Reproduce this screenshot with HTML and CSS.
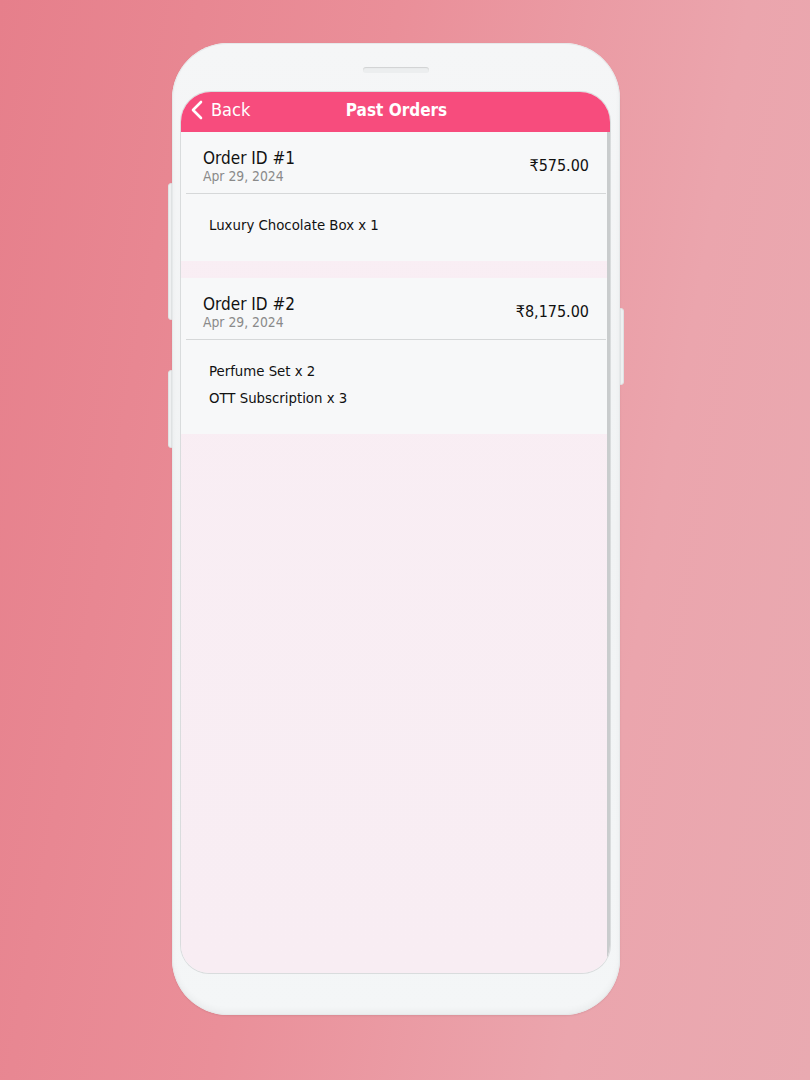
FILE: index.html
```html
<!DOCTYPE html>
<html>
<head>
<meta charset="utf-8">
<link rel="stylesheet" href="styles.css">
</head>
<body>
<div class="stage">
  <div class="phone">
    <span class="btn btn-l1"></span>
    <span class="btn btn-l2"></span>
    <span class="btn btn-r1"></span>
    <div class="speaker"></div>
    <div class="screen">
      <div class="topbar">
        <div class="back">
          <svg width="14" height="20" viewBox="0 0 14 20"><path d="M11 2 L3 10 L11 18" fill="none" stroke="#fff" stroke-width="2.6" stroke-linecap="round" stroke-linejoin="round"/></svg>
          <span>Back</span>
        </div>
        <div class="title">Past Orders</div>
      </div>
      <div class="list">
        <div class="card">
          <div class="card-head">
            <div class="ids">
              <div class="oid">Order ID #1</div>
              <div class="date">Apr 29, 2024</div>
            </div>
            <div class="price">₹575.00</div>
          </div>
          <div class="items">
            <div class="item">Luxury Chocolate Box x 1</div>
          </div>
        </div>
        <div class="card">
          <div class="card-head">
            <div class="ids">
              <div class="oid">Order ID #2</div>
              <div class="date">Apr 29, 2024</div>
            </div>
            <div class="price">₹8,175.00</div>
          </div>
          <div class="items">
            <div class="item">Perfume Set x 2</div>
            <div class="item">OTT Subscription x 3</div>
          </div>
        </div>
      </div>
    </div>
  </div>
</div>
</body>
</html>
```
FILE: styles.css
```css
html, body {
  margin: 0;
  padding: 0;
}
body {
  font-family: "DejaVu Sans Condensed", "DejaVu Sans", sans-serif;
}
.stage {
  width: 810px;
  height: 1080px;
  box-sizing: border-box;
  padding: 43px 0 0 172px;
  background: linear-gradient(100deg, #e67f8b 0%, #ea8f99 40%, #eba5ad 75%, #e9aab1 100%);
  overflow: hidden;
}
.phone {
  position: relative;
  width: 448px;
  height: 972px;
  box-sizing: border-box;
  padding: 49px 10px 42px 9px;
  border-radius: 56px;
  background: linear-gradient(180deg, #f5f6f7 0%, #f1f3f4 50%, #f4f6f7 100%);
  box-shadow: inset 0 0 0 1px #e6e9ea, inset 0 -4px 6px rgba(0,0,0,0.04), 0 1px 2px rgba(0,0,0,0.08);
}
.btn {
  position: absolute;
  width: 4px;
  background: #eef0f1;
  border: 1px solid #dfe2e3;
  box-sizing: border-box;
}
.btn-l1 { left: -4px; top: 140px; height: 137px; border-radius: 3px 0 0 3px; }
.btn-l2 { left: -4px; top: 327px; height: 78px; border-radius: 3px 0 0 3px; }
.btn-r1 { right: -4px; top: 265px; height: 77px; border-radius: 0 3px 3px 0; }
.speaker {
  position: absolute;
  left: 191px;
  top: 24px;
  width: 66px;
  height: 6px;
  border-radius: 3px;
  background: #eceeef;
  box-shadow: inset 0 1px 1px rgba(0,0,0,0.12);
}
.screen {
  height: 100%;
  border-radius: 30px 30px 28px 28px;
  overflow: hidden;
  background: linear-gradient(180deg, #f9eef4 0%, #f8edf3 100%);
  box-shadow: 0 0 0 1px #d9dcdd;
  display: flex;
  flex-direction: column;
}
.topbar {
  height: 40px;
  flex: none;
  background: #f74c7d;
  position: relative;
  display: flex;
  align-items: center;
  justify-content: center;
  color: #fff;
}
.back {
  position: absolute;
  left: 9px;
  top: 0;
  height: 40px;
  display: flex;
  align-items: center;
  gap: 7px;
  font-size: 18px;
}
.back svg { margin-top: -4px; }
.back span { margin-top: -5px; }
.title {
  font-size: 17px;
  font-weight: bold;
  margin-top: -5px;
  margin-left: 2px;
}
.list {
  flex: 1;
  display: flex;
  flex-direction: column;
  gap: 17px;
  border-right: 3px solid #c9cccd;
}
.card {
  background: #f7f8f9;
}
.card-head {
  height: 62px;
  box-sizing: border-box;
  margin: 0 1px 0 5px;
  border-bottom: 1px solid #d6d8d9;
  display: flex;
  align-items: center;
  justify-content: space-between;
  padding: 0 17px 0 17px;
}
.ids {
  display: flex;
  flex-direction: column;
  margin-top: 6px;
}
.oid {
  font-size: 17px;
  color: #111;
  line-height: 20px;
}
.date {
  font-size: 13.8px;
  color: #8a8a8a;
  line-height: 16px;
}
.price {
  font-size: 16px;
  color: #111;
  margin-top: 6px;
}
.items {
  padding: 22px 0 28px 28px;
  display: flex;
  flex-direction: column;
  gap: 10px;
}
.item {
  font-size: 14.8px;
  color: #111;
  line-height: 17px;
  height: 17px;
}
```
